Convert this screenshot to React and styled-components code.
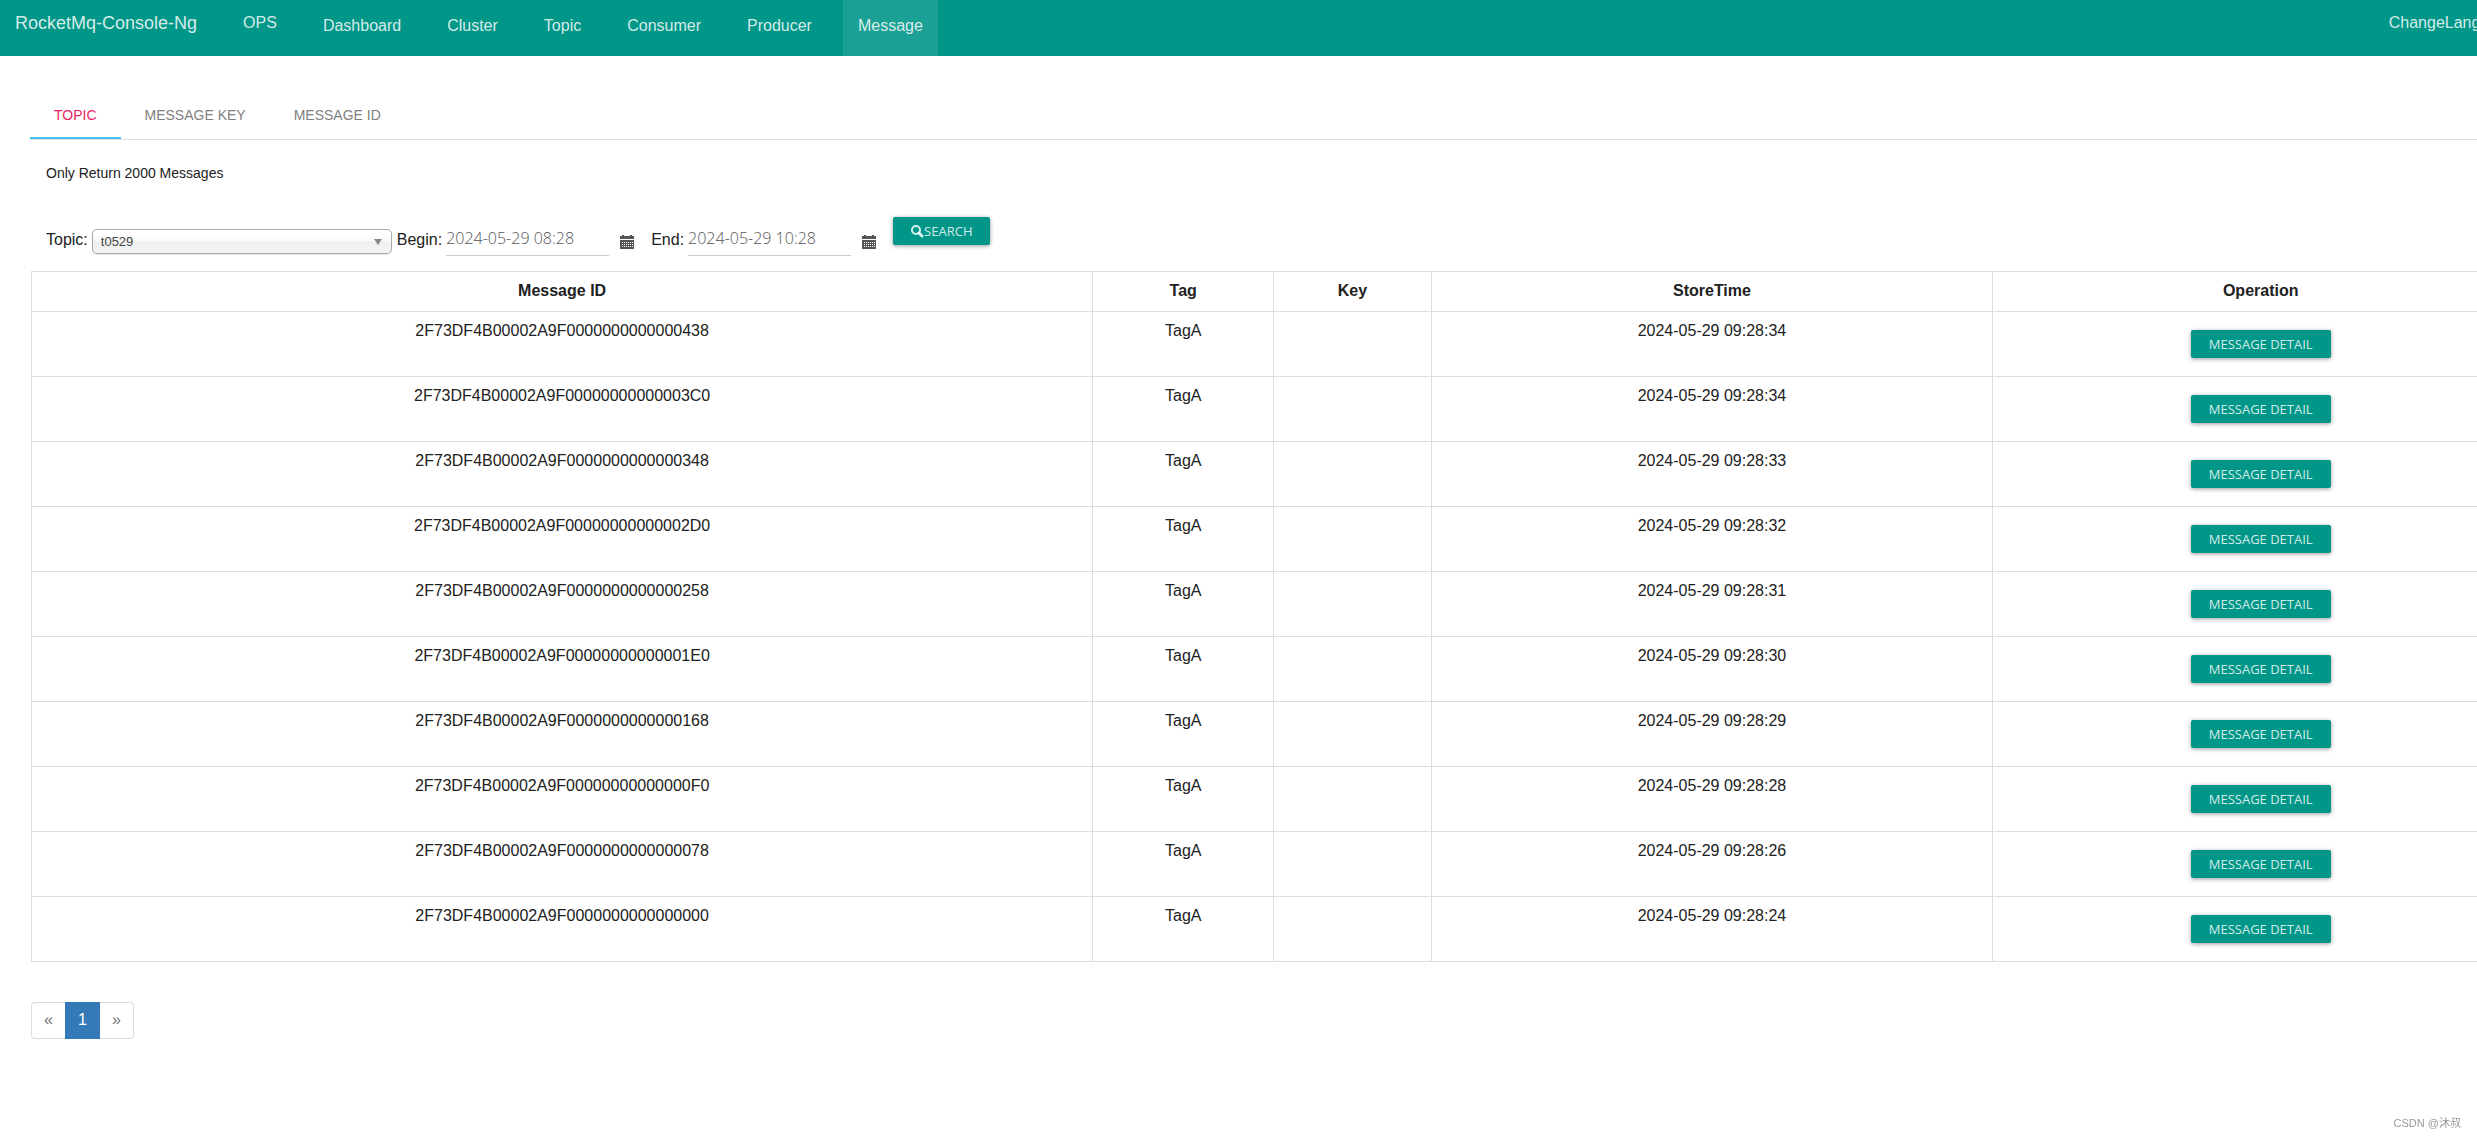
import React, { useState } from 'react'
import styled, { createGlobalStyle } from 'styled-components'

const GlobalStyle = createGlobalStyle`
* {
    box-sizing: border-box;
}
body {
    margin: 0;
    background: #fff;
    color: #212121;
    font-family: "Liberation Sans", Arial, sans-serif;
    font-size: 16px;
    line-height: 24px;
}
`;

const Page = styled.div`
    min-height: 100vh;
    overflow-x: clip;
`;

const Navbar = styled.header`
    display: flex;
    align-items: flex-start;
    height: 56px;
    margin-right: -39px;
    background: #009688;
    color: rgba(255, 255, 255, 0.84);
`;

const Brand = styled.a`
    padding: 11px 46px 0 15px;
    color: inherit;
    font-size: 18px;
    text-decoration: none;
`;

const PlainLink = styled.a`
    padding-top: 11px;
    color: inherit;
    text-decoration: none;
`;

const NavList = styled.nav`
    display: flex;
    flex: 1;
    gap: 16px;
    height: 100%;
    margin-left: 31px;
`;

const NavLink = styled.a`
    padding: 14px 15px 0;
    background: ${({ $active }) => ($active ? 'rgba(255, 255, 255, 0.1)' : 'transparent')};
    color: inherit;
    text-decoration: none;
`;

const Content = styled.main`
    margin: 34px -52px 0 30px;
`;

const TabBar = styled.div`
    display: flex;
    height: 50px;
    border-bottom: 1px solid #e0e0e0;
`;

const Tab = styled.button`
    padding: 2px 24px 0;
    border: 0;
    border-bottom: 2px solid ${({ $active }) => ($active ? '#40c4ff' : 'transparent')};
    background: none;
    color: ${({ $active }) => ($active ? '#e91e63' : '#808080')};
    font: 14px "Liberation Sans", Arial, sans-serif;
    text-transform: uppercase;
`;

const Note = styled.p`
    margin: 21px 16px 32px;
    font-size: 14px;
`;

const Filters = styled.form`
    display: flex;
    align-items: flex-start;
    height: 54px;
    padding: 0 16px;
`;

const Label = styled.label`
    margin: 11px 4px 0 0;
`;

const SelectWrap = styled.div`
    position: relative;
    width: 300px;
    margin: 12px 5px 0 0;
`;

const Select = styled.select`
    display: block;
    appearance: none;
    width: 100%;
    height: 25px;
    padding: 0 8px;
    border: 1px solid #aaa;
    border-radius: 5px;
    background: linear-gradient(#fff 20%, #f6f6f6 50%, #eee 52%, #f4f4f4 100%);
    box-shadow: 0 1px 1px rgba(0, 0, 0, 0.1);
    color: #444;
    font: 13px "Liberation Sans", Arial, sans-serif;
`;

const Caret = styled.span`
    position: absolute;
    top: 10px;
    right: 10px;
    border: solid transparent;
    border-width: 6px 4px 0;
    border-top-color: #888;
    pointer-events: none;
`;

const DateInput = styled.input`
    width: 163px;
    height: 36px;
    margin-top: 3px;
    padding: 0;
    border: 0;
    border-bottom: 1px solid #ccc;
    background: none;
    color: #555;
    font: 300 16px "Open Sans", sans-serif;
`;

const IconButton = styled.button`
    display: flex;
    margin: 18px 17px 0 11px;
    padding: 0;
    border: 0;
    background: none;
    color: #555;
`;

const RaisedButton = styled.button`
    display: inline-flex;
    align-items: center;
    height: 28px;
    padding: 0 18px;
    border: 0;
    border-radius: 2px;
    background: #009688;
    box-shadow: 0 1px 4px rgba(0, 0, 0, 0.4);
    color: rgba(255, 255, 255, 0.84);
    font: 13px "Open Sans", sans-serif;
    text-transform: uppercase;
`;

const Table = styled.table`
    width: calc(100% - 1px);
    margin-left: 1px;
    table-layout: fixed;
    border-collapse: collapse;
    text-align: center;
`;

const HeadCell = styled.th`
    width: ${({ $width }) => $width};
    height: 40px;
    padding: 0 8px 1px;
    border: 1px solid #ddd;
`;

const Cell = styled.td`
    height: 65px;
    padding: 7px 8px 0;
    border: 1px solid #ddd;
    vertical-align: top;
`;

const ActionCell = styled(Cell)`
    padding: 18px 8px 0;
`;

const Pagination = styled.nav`
    display: inline-flex;
    margin: 40px 1px;
`;

const PageButton = styled.button`
    width: ${({ $active }) => ($active ? '35px' : '34px')};
    height: 37px;
    padding: 0 0 2px;
    border: 1px solid ${({ $active }) => ($active ? '#337ab7' : '#ddd')};
    background: ${({ $active }) => ($active ? '#337ab7' : '#fff')};
    color: ${({ $active }) => ($active ? '#fff' : '#777')};
    font: 16px "Liberation Sans", Arial, sans-serif;
    &:first-child {
        border-right: 0;
        border-radius: 4px 0 0 4px;
    }
    &:last-child {
        border-left: 0;
        border-radius: 0 4px 4px 0;
    }
`;

const Watermark = styled.span`
    position: fixed;
    right: 16px;
    bottom: 8px;
    color: #999;
    font: 11px "Liberation Sans", "Noto Sans CJK SC", sans-serif;
`;

const navItems = ['Dashboard', 'Cluster', 'Topic', 'Consumer', 'Producer', 'Message']
const tabs = ['Topic', 'Message Key', 'Message ID']
const columns = [
    { title: 'Message ID', width: '42.5%' },
    { title: 'Tag', width: '7.25%' },
    { title: 'Key', width: '6.3%' },
    { title: 'StoreTime', width: '22.5%' },
    { title: 'Operation', width: '21.45%' },
]
const messages = [
    { id: '2F73DF4B00002A9F0000000000000438', time: '2024-05-29 09:28:34' },
    { id: '2F73DF4B00002A9F00000000000003C0', time: '2024-05-29 09:28:34' },
    { id: '2F73DF4B00002A9F0000000000000348', time: '2024-05-29 09:28:33' },
    { id: '2F73DF4B00002A9F00000000000002D0', time: '2024-05-29 09:28:32' },
    { id: '2F73DF4B00002A9F0000000000000258', time: '2024-05-29 09:28:31' },
    { id: '2F73DF4B00002A9F00000000000001E0', time: '2024-05-29 09:28:30' },
    { id: '2F73DF4B00002A9F0000000000000168', time: '2024-05-29 09:28:29' },
    { id: '2F73DF4B00002A9F00000000000000F0', time: '2024-05-29 09:28:28' },
    { id: '2F73DF4B00002A9F0000000000000078', time: '2024-05-29 09:28:26' },
    { id: '2F73DF4B00002A9F0000000000000000', time: '2024-05-29 09:28:24' },
]

const CalendarIcon = () => (
    <svg width="14" height="14" viewBox="0 0 14 14" fill="currentColor" aria-hidden="true">
        <path d="M0 1h2V0h2v1h6V0h2v1h2v3H0z" />
        <path d="M0 5h14v9H0z" />
        <path d="M2 7.5h11M2 9.5h11M2 11.5h11" stroke="#fff" strokeDasharray="1 1" />
    </svg>
)

const SearchIcon = () => (
    <svg width="13" height="13" viewBox="0 0 13 13" fill="none" stroke="currentColor" aria-hidden="true">
        <circle cx="5" cy="5" r="4" strokeWidth="2" />
        <path d="M8 8l3 3" strokeWidth="3" strokeLinecap="round" />
    </svg>
)

const DateField = ({ id, label, value, onChange }) => (
    <React.Fragment>
        <Label htmlFor={id}>{label}</Label>
        <DateInput id={id} value={value} onChange={(e) => onChange(e.target.value)} />
        <IconButton type="button" aria-label={`${label} calendar`}>
            <CalendarIcon />
        </IconButton>
    </React.Fragment>
)

function App() {
    const [tab, setTab] = useState('Topic')
    const [begin, setBegin] = useState('2024-05-29 08:28')
    const [end, setEnd] = useState('2024-05-29 10:28')

    return (
        <Page>
            <GlobalStyle />
            <Navbar>
                <Brand href="#">RocketMq-Console-Ng</Brand>
                <PlainLink href="#ops">OPS</PlainLink>
                <NavList>
                    {navItems.map((item) => (
                        <NavLink key={item} href={`#${item.toLowerCase()}`} $active={item === 'Message'}>
                            {item}
                        </NavLink>
                    ))}
                </NavList>
                <PlainLink href="#lang">ChangeLanguage</PlainLink>
            </Navbar>
            <Content>
                <TabBar role="tablist">
                    {tabs.map((name) => (
                        <Tab
                            key={name}
                            role="tab"
                            aria-selected={tab === name}
                            $active={tab === name}
                            onClick={() => setTab(name)}
                        >
                            {name}
                        </Tab>
                    ))}
                </TabBar>
                <Note>Only Return 2000 Messages</Note>
                <Filters onSubmit={(e) => e.preventDefault()}>
                    <Label htmlFor="topic">Topic:</Label>
                    <SelectWrap>
                        <Select id="topic" defaultValue="t0529">
                            <option>t0529</option>
                        </Select>
                        <Caret />
                    </SelectWrap>
                    <DateField id="begin" label="Begin:" value={begin} onChange={setBegin} />
                    <DateField id="end" label="End:" value={end} onChange={setEnd} />
                    <RaisedButton type="submit">
                        <SearchIcon />
                        Search
                    </RaisedButton>
                </Filters>
                <Table>
                    <thead>
                        <tr>
                            {columns.map(({ title, width }) => (
                                <HeadCell key={title} $width={width}>
                                    {title}
                                </HeadCell>
                            ))}
                        </tr>
                    </thead>
                    <tbody>
                        {messages.map(({ id, time }) => (
                            <tr key={id}>
                                <Cell>{id}</Cell>
                                <Cell>TagA</Cell>
                                <Cell />
                                <Cell>{time}</Cell>
                                <ActionCell>
                                    <RaisedButton type="button">Message Detail</RaisedButton>
                                </ActionCell>
                            </tr>
                        ))}
                    </tbody>
                </Table>
                <Pagination aria-label="Pages">
                    <PageButton>«</PageButton>
                    <PageButton $active>1</PageButton>
                    <PageButton>»</PageButton>
                </Pagination>
            </Content>
            <Watermark>CSDN @沐叔</Watermark>
        </Page>
    )
}

export default App
